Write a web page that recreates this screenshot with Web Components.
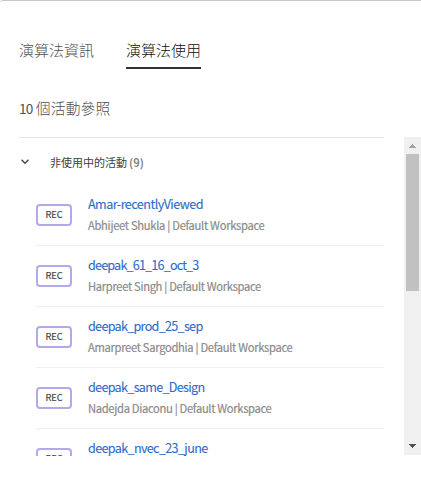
<!DOCTYPE html>
<html lang="zh-Hant">
<head>
<meta charset="utf-8">
<title>演算法使用</title>
<style>
html,body{margin:0;height:100%;overflow:hidden;background:#fff}
body{font-family:"Noto Sans CJK TC","Liberation Sans",sans-serif}
</style>
</head>
<body>
<usage-dialog>
  <tab-bar slot="tabs">
    <tab-item><fit-text width="75">演算法資訊</fit-text></tab-item>
    <tab-item selected><fit-text width="75">演算法使用</fit-text></tab-item>
  </tab-bar>
  <fit-text slot="summary" width="91.5"><span style="font-size:13.6px;font-weight:400;letter-spacing:-.8px">10</span> 個活動參照</fit-text>
  <activity-group slot="list">
    <fit-text slot="label" width="77">非使用中的活動</fit-text>
    <fit-text slot="count" width="15">(9)</fit-text>
    <activity-row><fit-text slot="name" width="115">Amar-recentlyViewed</fit-text><fit-text slot="meta" width="176.5">Abhijeet Shukla | Default Workspace</fit-text></activity-row>
    <activity-row><fit-text slot="name" width="110.5">deepak_61_16_oct_3</fit-text><fit-text slot="meta" width="173">Harpreet Singh | Default Workspace</fit-text></activity-row>
    <activity-row><fit-text slot="name" width="114.5">deepak_prod_25_sep</fit-text><fit-text slot="meta" width="204.5">Amarpreet Sargodhia | Default Workspace</fit-text></activity-row>
    <activity-row><fit-text slot="name" width="116.5">deepak_same_Design</fit-text><fit-text slot="meta" width="183.5">Nadejda Diaconu | Default Workspace</fit-text></activity-row>
    <activity-row><fit-text slot="name" width="119.5">deepak_nvec_23_june</fit-text></activity-row>
  </activity-group>
  <scroll-bar slot="scroll"></scroll-bar>
</usage-dialog>
<script>
const define = (name, html, ready) => customElements.define(name, class extends HTMLElement {
  constructor() {
    super();
    this.attachShadow({ mode: 'open' }).innerHTML = html;
  }
  connectedCallback() { if (ready) ready(this); }
});

define('usage-dialog', `<style>
:host{display:flex;flex-direction:column;box-sizing:border-box;height:496px;border-top:1px solid #c8c8c8;border-top-left-radius:3px;background:#fff}
.tabs{padding:35px 0 0 19px;height:33px}
.summary{margin-top:27px;padding-left:19px;height:24px;line-height:24px;font-size:14.8px;color:#505050;font-weight:300}
.body{display:flex;justify-content:space-between;height:318px;margin-top:17px}
.list{width:365px;margin-left:19px;height:319px;overflow:hidden}
</style><div class="tabs"><slot name="tabs"></slot></div><div class="summary"><slot name="summary"></slot></div>
<div class="body"><div class="list"><slot name="list"></slot></div><slot name="scroll"></slot></div>`);

define('tab-bar', `<style>:host{display:flex;gap:32px}</style><slot></slot>`);

define('tab-item', `<style>
:host{display:block;box-sizing:border-box;width:75px;height:33px;font-size:15px;font-weight:300;line-height:28px;color:#505050;border-bottom:2px solid transparent}
:host([selected]){color:#101010;border-color:#323232}
</style><slot></slot>`);

define('activity-group', `<style>
:host{display:block;border-top:1px solid #e6e6e6}
header{display:flex;align-items:center;height:46px;font-size:11px;color:#404040;padding-top:1px}
svg{margin-left:2px;width:8px;height:6px;margin-right:21px;flex:none}
.count{color:#868686;font-weight:700;margin-left:2px;font-size:11px;margin-top:-1px}
.rows{margin-left:17px}
</style><header><svg viewBox="0 0 8 6"><path d="M1 1.2 4 4.2 7 1.2" fill="none" stroke="#505050" stroke-width="1.6" stroke-linecap="round" stroke-linejoin="round"/></svg><slot name="label"></slot><span class="count"><slot name="count"></slot></span></header>
<div class="rows"><slot></slot></div>`);

define('activity-row', `<style>
:host{display:flex;box-sizing:border-box;height:61px;border-bottom:1px solid #efefef}
.badge{box-sizing:border-box;width:36px;height:22px;margin:19px 16px 0 0;border:2px solid #b4a7ea;border-radius:4px;text-align:center;font-size:9.3px;line-height:17px;color:#404040;-webkit-text-stroke:.15px #404040;flex:none;letter-spacing:-.1px}
.text{padding-top:8px;min-width:0}
.name{height:21px;line-height:22px;font-size:12.6px;color:#2d6bc8;-webkit-text-stroke:.1px #2d6bc8}
.meta{height:22px;line-height:22px;font-size:11.2px;color:#8a8a8a;-webkit-text-stroke:.2px #8e8e8e}
</style><div class="badge">REC</div><div class="text"><div class="name"><slot name="name"></slot></div><div class="meta"><slot name="meta"></slot></div></div>`);

define('scroll-bar', `<style>
:host{display:flex;flex-direction:column;align-items:center;width:17px;height:318px;background:#f0f0f0}
svg{width:17px;height:17px;flex:none}
.thumb{width:13px;height:137px;background:#c1c1c1}
.fill{flex:1}
</style><svg viewBox="0 0 17 17" shape-rendering="crispEdges"><path d="M8 7h1v1h1v1h1v1h1v1H5v-1h1V9h1V8h1z" fill="#a3a3a3"/></svg><div class="thumb"></div><div class="fill"></div>
<svg viewBox="0 0 17 17" shape-rendering="crispEdges"><path d="M5 6h7v1h-1v1h-1v1H9v1H8V9H7V8H6V7H5z" fill="#505050"/></svg>`);

// Sets its tracking so that the line takes the width it is given.
define('fit-text', `<style>:host{display:inline-block;white-space:nowrap}</style><slot></slot>`, el => {
  const n = el.textContent.length;
  const natural = el.getBoundingClientRect().width;
  el.style.letterSpacing = ((+el.getAttribute('width') - natural) / n) + 'px';
});
</script>
</body>
</html>
